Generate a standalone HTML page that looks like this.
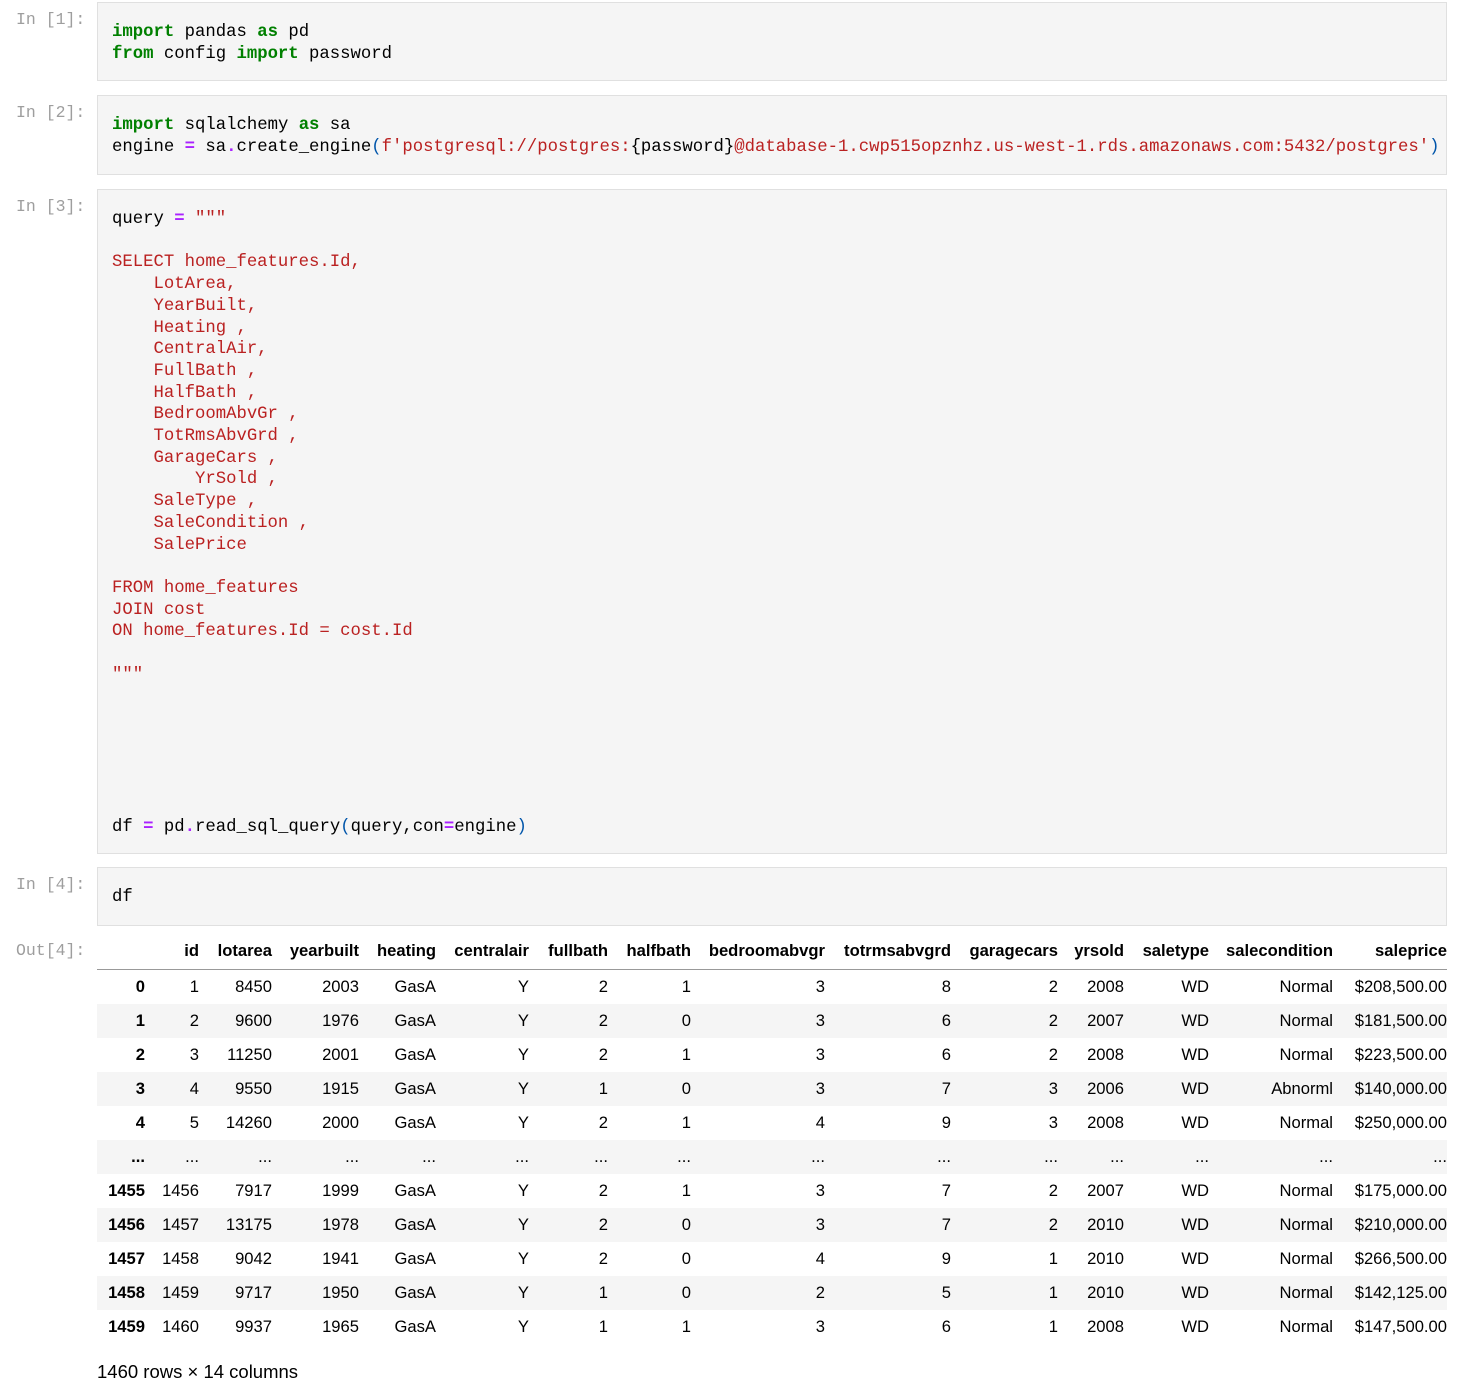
<!DOCTYPE html>
<html><head><meta charset="utf-8"><style>
body{margin:0;background:#fff;width:1476px;height:1380px;position:relative;overflow:hidden;font-family:"Liberation Sans",sans-serif}
.p{position:absolute;left:16px;font-family:"Liberation Mono",monospace;font-size:16.5px;color:#9e9e9e;line-height:21.7px}
.c{position:absolute;left:97px;width:1350px;background:#f5f5f5;border:1px solid #e0e0e0;box-sizing:border-box}
.c pre{margin:0;padding:19px 0 0 14px;font-family:"Liberation Mono",monospace;font-size:17.3px;line-height:21.7px;color:#000;white-space:pre}
.k{color:#008000;font-weight:bold}.s{color:#ba2121}.o{color:#aa22ff;font-weight:bold}.b{color:#0055aa}
table{position:absolute;left:97px;top:931px;border-collapse:collapse;table-layout:fixed;width:1350px;font-size:16.6px;color:#000}
td,th{text-align:right;padding:0;height:34px;white-space:nowrap}
thead th{height:36px;border-bottom:1px solid #999;vertical-align:middle;padding-top:2px}
tbody tr:nth-child(even){background:#f5f5f5}
tbody th{font-weight:bold}
.f{position:absolute;left:97px;top:1361px;font-size:18.5px}
</style></head><body>
<div class="p" style="top:9px">In [1]:</div>
<div class="c" style="top:2px;height:79px"><pre><span class="k">import</span> pandas <span class="k">as</span> pd
<span class="k">from</span> config <span class="k">import</span> password</pre></div>
<div class="p" style="top:102px">In [2]:</div>
<div class="c" style="top:95px;height:80px"><pre><span class="k">import</span> sqlalchemy <span class="k">as</span> sa
engine <span class="o">=</span> sa<span class="o">.</span>create_engine<span class="b">(</span><span class="s">f'postgresql://postgres:</span>{password}<span class="s">@database-1.cwp515opznhz.us-west-1.rds.amazonaws.com:5432/postgres'</span><span class="b">)</span></pre></div>
<div class="p" style="top:196px">In [3]:</div>
<div class="c" style="top:189px;height:665px"><pre>query <span class="o">=</span> <span class="s">"""

SELECT home_features.Id,
    LotArea,
    YearBuilt,
    Heating ,
    CentralAir,
    FullBath ,
    HalfBath ,
    BedroomAbvGr ,
    TotRmsAbvGrd ,
    GarageCars ,
        YrSold ,
    SaleType ,
    SaleCondition ,
    SalePrice

FROM home_features
JOIN cost
ON home_features.Id = cost.Id

"""</span>






df <span class="o">=</span> pd<span class="o">.</span>read_sql_query<span class="b">(</span>query,con<span class="o">=</span>engine<span class="b">)</span></pre></div>
<div class="p" style="top:874px">In [4]:</div>
<div class="c" style="top:867px;height:59px"><pre>df</pre></div>
<div class="p" style="top:940px">Out[4]:</div>
<table>
<colgroup><col style="width:48px"><col style="width:54px"><col style="width:73px"><col style="width:87px"><col style="width:77px"><col style="width:93px"><col style="width:79px"><col style="width:83px"><col style="width:134px"><col style="width:126px"><col style="width:107px"><col style="width:66px"><col style="width:85px"><col style="width:124px"><col style="width:114px"></colgroup>
<thead><tr><th></th><th>id</th><th>lotarea</th><th>yearbuilt</th><th>heating</th><th>centralair</th><th>fullbath</th><th>halfbath</th><th>bedroomabvgr</th><th>totrmsabvgrd</th><th>garagecars</th><th>yrsold</th><th>saletype</th><th>salecondition</th><th>saleprice</th></tr></thead>
<tbody>
<tr><th>0</th><td>1</td><td>8450</td><td>2003</td><td>GasA</td><td>Y</td><td>2</td><td>1</td><td>3</td><td>8</td><td>2</td><td>2008</td><td>WD</td><td>Normal</td><td>$208,500.00</td></tr>
<tr><th>1</th><td>2</td><td>9600</td><td>1976</td><td>GasA</td><td>Y</td><td>2</td><td>0</td><td>3</td><td>6</td><td>2</td><td>2007</td><td>WD</td><td>Normal</td><td>$181,500.00</td></tr>
<tr><th>2</th><td>3</td><td>11250</td><td>2001</td><td>GasA</td><td>Y</td><td>2</td><td>1</td><td>3</td><td>6</td><td>2</td><td>2008</td><td>WD</td><td>Normal</td><td>$223,500.00</td></tr>
<tr><th>3</th><td>4</td><td>9550</td><td>1915</td><td>GasA</td><td>Y</td><td>1</td><td>0</td><td>3</td><td>7</td><td>3</td><td>2006</td><td>WD</td><td>Abnorml</td><td>$140,000.00</td></tr>
<tr><th>4</th><td>5</td><td>14260</td><td>2000</td><td>GasA</td><td>Y</td><td>2</td><td>1</td><td>4</td><td>9</td><td>3</td><td>2008</td><td>WD</td><td>Normal</td><td>$250,000.00</td></tr>
<tr><th>...</th><td>...</td><td>...</td><td>...</td><td>...</td><td>...</td><td>...</td><td>...</td><td>...</td><td>...</td><td>...</td><td>...</td><td>...</td><td>...</td><td>...</td></tr>
<tr><th>1455</th><td>1456</td><td>7917</td><td>1999</td><td>GasA</td><td>Y</td><td>2</td><td>1</td><td>3</td><td>7</td><td>2</td><td>2007</td><td>WD</td><td>Normal</td><td>$175,000.00</td></tr>
<tr><th>1456</th><td>1457</td><td>13175</td><td>1978</td><td>GasA</td><td>Y</td><td>2</td><td>0</td><td>3</td><td>7</td><td>2</td><td>2010</td><td>WD</td><td>Normal</td><td>$210,000.00</td></tr>
<tr><th>1457</th><td>1458</td><td>9042</td><td>1941</td><td>GasA</td><td>Y</td><td>2</td><td>0</td><td>4</td><td>9</td><td>1</td><td>2010</td><td>WD</td><td>Normal</td><td>$266,500.00</td></tr>
<tr><th>1458</th><td>1459</td><td>9717</td><td>1950</td><td>GasA</td><td>Y</td><td>1</td><td>0</td><td>2</td><td>5</td><td>1</td><td>2010</td><td>WD</td><td>Normal</td><td>$142,125.00</td></tr>
<tr><th>1459</th><td>1460</td><td>9937</td><td>1965</td><td>GasA</td><td>Y</td><td>1</td><td>1</td><td>3</td><td>6</td><td>1</td><td>2008</td><td>WD</td><td>Normal</td><td>$147,500.00</td></tr>
</tbody></table>
<div class="f">1460 rows × 14 columns</div>
</body></html>
